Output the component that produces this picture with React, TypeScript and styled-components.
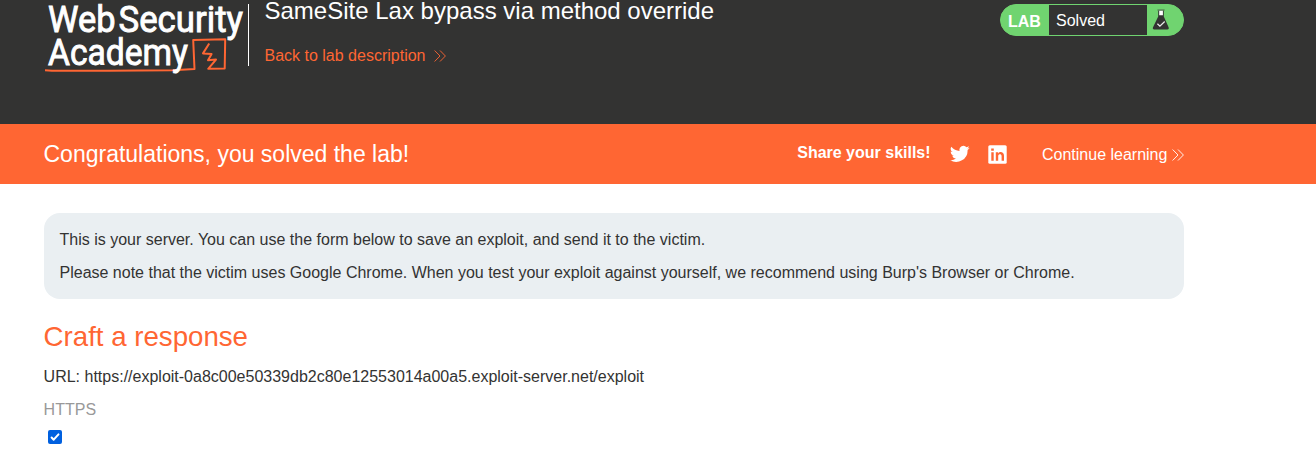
import React from 'react';
import styled, { createGlobalStyle } from 'styled-components';

const GlobalStyle = createGlobalStyle`
  * { box-sizing: border-box; }
  body {
    margin: 0;
    background: #fff;
    color: #333332;
    font: 16px/20px "Liberation Sans", Arial, sans-serif;
    overflow: hidden;
  }
  h1, h2, h3, p { margin: 0; font-weight: 400; }
  a { color: inherit; text-decoration: none; }
  svg { display: block; flex: none; }
`;

const Container = styled.div`
  width: 1140px;
  margin-left: 44px;
`;

const Header = styled.header`
  height: 124px;
  background: #333332;
  color: #fff;
`;

const HeaderRow = styled(Container)`
  display: flex;
  align-items: flex-start;
`;

const Logo = styled.svg`
  margin-left: -4px;
`;

const TitleBlock = styled.div`
  margin-top: 4px;
  height: 62px;
  padding-left: 15.5px;
  border-left: 1px solid #fff;
`;

const Title = styled.h2`
  margin-top: -7px;
  font-size: 24px;
  line-height: 28px;
  white-space: nowrap;
`;

const ArrowLink = styled.a<{ $gap: number; $color: string }>`
  display: inline-flex;
  align-items: center;
  gap: ${(p) => p.$gap}px;
  color: ${(p) => p.$color};
  white-space: nowrap;
`;

const BackRow = styled.div`
  margin-top: 21px;
  display: flex;
`;

const Status = styled.div`
  display: flex;
  width: 184px;
  height: 32px;
  margin: 4px 0 0 auto;
  border: 1px solid #70d470;
  border-radius: 16px;
  background: #70d470;
  overflow: hidden;
  line-height: 31px;
`;

const StatusTag = styled.span`
  width: 48px;
  padding-left: 7px;
  line-height: 33px;
  font-weight: 700;
`;

const StatusText = styled.span`
  width: 98px;
  padding-left: 7px;
  background: #333332;
`;

const StatusIcon = styled.span`
  padding: 4px 0 0 5px;
`;

const Banner = styled.section`
  height: 60px;
  background: #ff6633;
  color: #fff;
`;

const BannerRow = styled(Container)`
  display: flex;
  align-items: center;
  height: 60px;
`;

const BannerTitle = styled.h3`
  margin-left: -0.5px;
  font-size: 23px;
  line-height: 28px;
`;

const Share = styled.div`
  display: flex;
  align-items: center;
  margin-left: auto;
  font-weight: 700;
`;

const ShareLabel = styled.span`
  margin: -3px 19px 0 0;
`;

const ShareIcon = styled.a`
  margin-right: 18px;
`;

const ContinueSlot = styled.div`
  display: flex;
  margin: 2px 0 0 16.4px;
`;

const Notice = styled.section`
  height: 86px;
  margin-top: 29px;
  padding: 17px 15.5px;
  border-radius: 16px;
  background: #eaeff2;
`;

const Paragraph = styled.p`
  & + & { margin-top: 13px; }
`;

const Heading = styled.h1`
  margin: 22px 0 14px -0.4px;
  color: #ff6633;
  font-size: 27.65px;
  line-height: 32px;
`;

const Url = styled(Paragraph)`
  margin-left: -0.4px;
`;

const Label = styled.label`
  display: block;
  margin: 13px 0 0 -0.4px;
  color: #999;
`;

const Checkbox = styled.span`
  display: flex;
  width: 14px;
  height: 14px;
  margin: 10px 0 0 4px;
  border-radius: 2px;
  background: #0060df;
`;

const Chevrons = () => (
  <svg width="12" height="12" viewBox="0 0 12 12" fill="none" stroke="currentColor" strokeWidth="0.9">
    <path d="M.6.5 6 6 .6 11.5M6 .5 11.4 6 6 11.5" />
  </svg>
);

const AcademyLogo = () => (
  <Logo width="208" height="80" viewBox="40 0 208 80" fontFamily="Roboto, sans-serif" fontWeight="400" fontSize="37" fill="#fff">
    <path
      d="M45 70.3 52 70.8 108 70.8 173 70.2 194.5 69 193.2 40 225.2 39.2 224.7 68.6 208.2 68.8 216 59.6 208 60.2 211.6 54 203 53.4 209.2 43.5"
      fill="none"
      stroke="#ff6633"
      strokeWidth="2"
      strokeLinejoin="round"
    />
    <g stroke="#fff" strokeWidth=".9">
      <text x="48" y="32.3" textLength="67.5" lengthAdjust="spacingAndGlyphs">Web</text>
      <text x="118.5" y="32.3" textLength="124.5" lengthAdjust="spacingAndGlyphs">Security</text>
      <text x="48" y="64.5" textLength="140" lengthAdjust="spacingAndGlyphs">Academy</text>
    </g>
  </Logo>
);

export default function App() {
  return (
    <>
      <GlobalStyle />
      <Header>
        <HeaderRow>
          <AcademyLogo />
          <TitleBlock>
            <Title>SameSite Lax bypass via method override</Title>
            <BackRow>
              <ArrowLink href="#" $gap={8.6} $color="#ff6633">
                Back to lab description
                <Chevrons />
              </ArrowLink>
            </BackRow>
          </TitleBlock>
          <Status>
            <StatusTag>LAB</StatusTag>
            <StatusText>Solved</StatusText>
            <StatusIcon>
              <svg width="18" height="22" viewBox="0 0 18 22">
                <path d="M6.2 1.4h5.6v6.2l4.9 11q.7 2-1.3 2H2.2q-2 0-1.3-2l5.3-11z" fill="#333332" />
                <path d="M7.2 1.6h3.7v4.6H7.2z" fill="#fff" />
                <path d="M5.4 1h7.2" stroke="#4d6a4c" strokeWidth="1.2" />
                <path d="m5.4 14.7 2.5 2.4 4.8-4.6" fill="none" stroke="#e8e8e8" strokeWidth="1.3" />
              </svg>
            </StatusIcon>
          </Status>
        </HeaderRow>
      </Header>
      <Banner>
        <BannerRow>
          <BannerTitle>Congratulations, you solved the lab!</BannerTitle>
          <Share>
            <ShareLabel>Share your skills!</ShareLabel>
            <ShareIcon href="#" aria-label="Twitter">
              <svg width="20" height="20" viewBox="0 0 24 24" fill="#fff">
                <path d="M23.6 4.6a9.6 9.6 0 0 1-2.8.8 4.8 4.8 0 0 0 2.1-2.7 9.7 9.7 0 0 1-3.1 1.2 4.8 4.8 0 0 0-8.3 4.4A13.7 13.7 0 0 1 1.6 3.3a4.8 4.8 0 0 0 1.5 6.4 4.8 4.8 0 0 1-2.2-.6 4.8 4.8 0 0 0 3.9 4.8 4.8 4.8 0 0 1-2.2.1 4.8 4.8 0 0 0 4.5 3.3A9.7 9.7 0 0 1 0 19.3a13.7 13.7 0 0 0 21.1-12.2 9.8 9.8 0 0 0 2.5-2.5z" />
              </svg>
            </ShareIcon>
            <ShareIcon href="#" aria-label="LinkedIn">
              <svg width="20" height="20" viewBox="0 0 20 20">
                <rect x=".3" y="1.2" width="18.4" height="18.6" rx="1.5" fill="#fff" />
                <path d="M3.3 8.2h2.4v8.6H3.3zM3.2 4.4h2.6v2.3H3.2zM7.8 8.2h2.3v1.2c1.7-2.2 5.9-1.7 5.9 2.3v5.1h-2.4v-4.6c0-2.5-3.4-2.4-3.4 0v4.6H7.8z" fill="#ff6633" />
              </svg>
            </ShareIcon>
          </Share>
          <ContinueSlot>
            <ArrowLink href="#" $gap={4.6} $color="#fff">
              Continue learning
              <Chevrons />
            </ArrowLink>
          </ContinueSlot>
        </BannerRow>
      </Banner>
      <Container as="main">
        <Notice>
          <Paragraph>This is your server. You can use the form below to save an exploit, and send it to the victim.</Paragraph>
          <Paragraph>
            Please note that the victim uses Google Chrome. When you test your exploit against yourself, we recommend using Burp's Browser or Chrome.
          </Paragraph>
        </Notice>
        <Heading>Craft a response</Heading>
        <Url>URL: https://exploit-0a8c00e50339db2c80e12553014a00a5.exploit-server.net/exploit</Url>
        <Label>HTTPS</Label>
        <Checkbox role="checkbox" aria-checked="true">
          <svg width="14" height="14" viewBox="0 0 14 14" fill="none" stroke="#fff" strokeWidth="2" strokeLinecap="round" strokeLinejoin="round">
            <path d="m3.6 7.5 2.1 2.2 4.8-5.3" />
          </svg>
        </Checkbox>
      </Container>
    </>
  );
}
